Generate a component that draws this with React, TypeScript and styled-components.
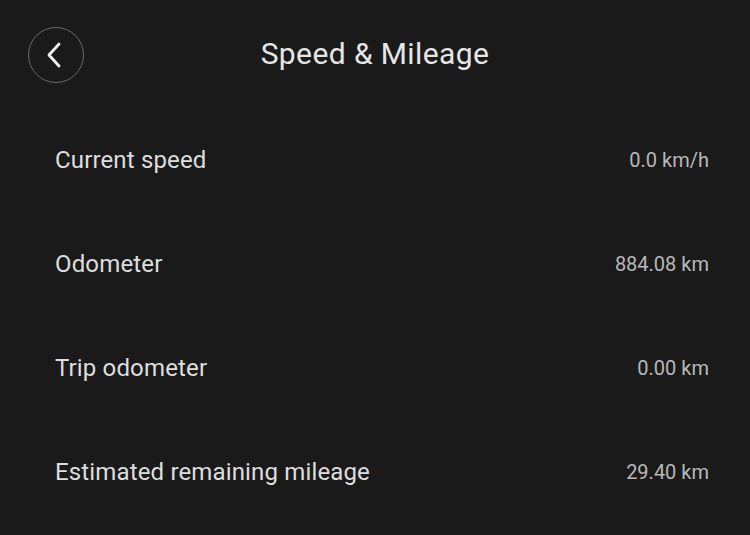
import React from 'react';
import styled, { createGlobalStyle } from 'styled-components';

const GlobalStyle = createGlobalStyle`
    html, body {
        margin: 0;
        padding: 0;
        background: #1a1a1a;
    }
    body {
        font-family: Roboto, "Liberation Sans", sans-serif;
    }
`;

const Page = styled.div`
    width: 750px;
    height: 535px;
    background: #1a1a1a;
    overflow: hidden;
`;

const Header = styled.div`
    position: relative;
    height: 108px;
    display: flex;
    align-items: center;
    justify-content: center;
`;

const BackButton = styled.button`
    position: absolute;
    left: 28px;
    top: 27px;
    width: 56px;
    height: 56px;
    border-radius: 50%;
    border: 1.5px solid #6a6a6a;
    background: transparent;
    display: flex;
    align-items: center;
    justify-content: center;
    padding: 0;
    cursor: pointer;
`;

const Title = styled.h1`
    margin: 0 0 1px;
    font-size: 30px;
    font-weight: 400;
    color: #e6e6e6;
    letter-spacing: 0.4px;
`;

const List = styled.div`
    display: flex;
    flex-direction: column;
    padding: 0 41px 0 55px;
`;

const Row = styled.div`
    height: 104px;
    display: flex;
    align-items: center;
    justify-content: space-between;
`;

const Label = styled.span`
    font-size: 24px;
    color: #dedede;
    letter-spacing: 0.15px;
`;

const Value = styled.span`
    font-size: 20px;
    color: #b8b8b8;
`;

const rows = [
    { label: 'Current speed', value: '0.0 km/h' },
    { label: 'Odometer', value: '884.08 km' },
    { label: 'Trip odometer', value: '0.00 km' },
    { label: 'Estimated remaining mileage', value: '29.40 km' },
];

const App: React.FC = () => (
    <Page>
        <GlobalStyle />
        <Header>
            <BackButton aria-label="Back">
                <svg width="24" height="28" viewBox="0 0 24 28" fill="none" style={{ marginLeft: -3 }}>
                    <path d="M16 3 L6 14 L16 25" stroke="#f0f0f0" strokeWidth="2.8" strokeLinecap="round" strokeLinejoin="round" />
                </svg>
            </BackButton>
            <Title>Speed &amp; Mileage</Title>
        </Header>
        <List>
            {rows.map((r) => (
                <Row key={r.label}>
                    <Label>{r.label}</Label>
                    <Value>{r.value}</Value>
                </Row>
            ))}
        </List>
    </Page>
);

export default App;
